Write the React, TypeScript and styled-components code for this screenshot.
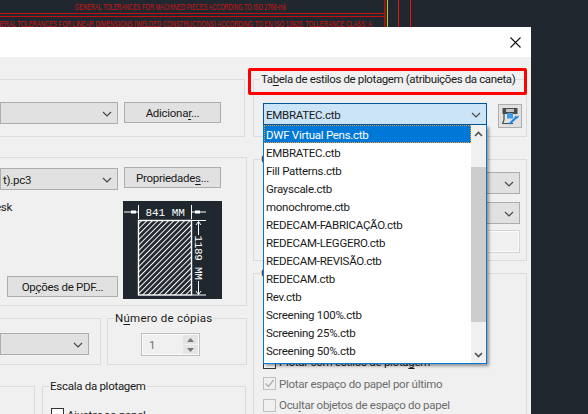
import styled, { createGlobalStyle } from 'styled-components';

const GlobalStyle = createGlobalStyle`
  html, body {
    margin: 0;
    height: 414px;
    overflow: hidden;
    background: #20272f;
    font-family: Roboto, "Liberation Sans", sans-serif;
    font-size: 11.5px;
    letter-spacing: -0.28px;
    color: #1a1a1a;
  }
`;

const Page = styled.div`
  width: 588px;
  height: 414px;
  overflow: hidden;
`;

const CadStrip = styled.svg`
  display: block;
  width: 588px;
  height: 27px;
`;

const Dialog = styled.div`
  width: 531px;
  height: 387px;
  background: #f0f0f0;
  overflow: hidden;
`;

const TitleBar = styled.div`
  height: 30px;
  background: #fff;
  display: flex;
  align-items: center;
  justify-content: flex-end;
  padding-right: 10px;
`;

const Body = styled.div`
  display: grid;
  grid-template-columns: 247px 274px;
  column-gap: 6px;
  padding-top: 22px;
`;

const Column = styled.div`
  display: flex;
  flex-direction: column;
  position: relative;
`;

const Group = styled.div<{ $h?: number; $mt?: number; $w?: number; $open?: boolean }>`
  position: relative;
  box-sizing: border-box;
  flex: none;
  ${p => (p.$h ? `height: ${p.$h}px;` : '')}
  ${p => (p.$w ? `width: ${p.$w}px;` : '')}
  margin-top: ${p => p.$mt ?? 0}px;
  border: 1px solid #dcdcdc;
  ${p => (p.$open ? 'border-left: none;' : '')}
`;

const Legend = styled.span<{ $track?: number }>`
  position: absolute;
  top: -9px;
  left: 6px;
  padding: 0 1px;
  background: #f0f0f0;
  white-space: nowrap;
  line-height: 17px;
  ${p => (p.$track !== undefined ? `letter-spacing: ${p.$track}px;` : '')}
`;

const Key = styled.u`
  text-underline-offset: 2px;
`;

const FirstGroup = styled(Group)`
  display: flex;
  align-items: flex-start;
  padding-top: 22px;
  margin-right: 2px;
`;

const SecondGroup = styled(Group)`
  display: grid;
  grid-template-columns: 118px 99px;
  column-gap: 5px;
  grid-template-rows: 32px 1fr;
  padding-top: 10px;
`;

const Combo = styled.div<{ $w?: number; $h?: number; $active?: boolean; $mt?: number }>`
  box-sizing: border-box;
  width: ${p => (p.$w ? `${p.$w}px` : '100%')};
  height: ${p => p.$h ?? 22}px;
  margin-top: ${p => p.$mt ?? 0}px;
  display: flex;
  align-items: center;
  justify-content: flex-end;
  padding: 1px 5px 0 2px;
  background: ${p => (p.$active ? '#cce4f7' : '#e1e1e1')};
  border: 1px solid ${p => (p.$active ? '#005499' : '#adadad')};
  flex: none;
`;

const ComboText = styled.span<{ $left?: boolean }>`
  white-space: nowrap;
  ${p => (p.$left ? 'margin-right: auto;' : 'position: relative;')}
`;

const ChevronIcon = styled.svg`
  margin-left: auto;
  flex: none;
`;

const Chevron = () => (
  <ChevronIcon width="10" height="6" viewBox="0 0 10 6">
    <path d="M1 1 L5 5 L9 1" fill="none" stroke="#444" strokeWidth="1.1" />
  </ChevronIcon>
);

const Button = styled.div<{ $w: number; $ml?: number; $mt?: number }>`
  box-sizing: border-box;
  width: ${p => p.$w}px;
  height: 21px;
  margin: ${p => p.$mt ?? 0}px 0 0 ${p => p.$ml ?? 0}px;
  display: flex;
  align-items: center;
  justify-content: center;
  background: #e1e1e1;
  border: 1px solid #adadad;
  white-space: nowrap;
  flex: none;
`;

const ClippedText = styled.div`
  width: 12px;
  display: flex;
  justify-content: flex-end;
  white-space: nowrap;
`;

const DeviceInfo = styled.div`
  display: flex;
  flex-direction: column;
  justify-content: space-between;
  height: 99px;
  padding-bottom: 2px;
  box-sizing: border-box;
`;

const PreviewBox = styled.svg`
  display: block;
  width: 99px;
  height: 98px;
  margin-top: 1px;
  background: #21272f;
`;

const SplitRow = styled.div<{ $mt: number; $gap: number }>`
  display: flex;
  column-gap: ${p => p.$gap}px;
  margin-top: ${p => p.$mt}px;
  align-items: flex-start;
`;

const PaperGroup = styled(Group)`
  padding-top: 14px;
  padding-right: 11px;
`;

const CopiesGroup = styled(Group)`
  padding: 14px 0 0 33px;
`;

const Spin = styled.div`
  box-sizing: border-box;
  width: 59px;
  height: 23px;
  display: flex;
  align-items: center;
  justify-content: space-between;
  padding: 0 1px 0 7px;
  border: 1px solid #bfbfbf;
  box-shadow: inset 0 0 0 1px #fafafa;
  color: #6d6d88;
`;

const SpinButtons = styled.div`
  display: flex;
  flex-direction: column;
  row-gap: 1px;
`;

const SpinButton = styled.div`
  width: 15px;
  height: 9px;
  display: flex;
  align-items: center;
  justify-content: center;
  background: #e4e4e4;
`;

const ScaleGroup = styled(Group)`
  padding: 17px 0 0 8px;
`;

const Check = styled.label<{ $disabled?: boolean }>`
  display: flex;
  align-items: center;
  column-gap: 3px;
  height: 21.5px;
  white-space: nowrap;
  color: ${p => (p.$disabled ? '#6d6d6d' : '#1a1a1a')};
`;

const CheckBox = styled.span<{ $disabled?: boolean }>`
  box-sizing: border-box;
  width: 13px;
  height: 13px;
  flex: none;
  display: flex;
  align-items: center;
  justify-content: center;
  background: ${p => (p.$disabled ? '#f0f0f0' : '#fff')};
  border: 1px solid ${p => (p.$disabled ? '#bfbfbf' : '#333')};
`;

const TableGroup = styled(Group)`
  display: flex;
  align-items: flex-start;
  padding: 23px 0 0 9px;
`;

const Highlight = styled.div`
  position: absolute;
  top: -12px;
  left: -6px;
  width: 279px;
  height: 27px;
  box-sizing: border-box;
  border: 3px solid #f00;
  border-radius: 2px;
  pointer-events: none;
`;

const ComboWrap = styled.div`
  position: relative;
  width: 224px;
  flex: none;
`;

const IconButton = styled.div`
  box-sizing: border-box;
  width: 24px;
  height: 24px;
  margin: 1px 0 0 11px;
  background: #e1e1e1;
  border: 1px solid #adadad;
  flex: none;
`;

const Dropdown = styled.div`
  position: absolute;
  z-index: 2;
  top: 100%;
  left: 0;
  width: 224px;
  height: 239px;
  box-sizing: border-box;
  display: flex;
  background: #fff;
  border: 1px solid #0078d7;
  border-top: none;
  box-shadow: 2px 2px 3px rgba(0, 0, 0, 0.4);
`;

const OptionList = styled.div`
  flex: 1;
  min-width: 0;
`;

const Option = styled.div<{ $selected?: boolean }>`
  box-sizing: border-box;
  height: 18px;
  line-height: 20px;
  padding-left: 2px;
  white-space: nowrap;
  ${p =>
    p.$selected
      ? `background: #0078d7;
         color: #fff;
         outline: 1px dotted #f29a2e;
         outline-offset: -1px;`
      : ''}
`;

const ScrollBar = styled.div`
  width: 15px;
  flex: none;
  display: flex;
  flex-direction: column;
  background: #f0f0f0;
`;

const ScrollArrow = styled.div`
  height: 17px;
  flex: none;
  display: flex;
  align-items: center;
  justify-content: center;
`;

const ScrollTrack = styled.div`
  flex: 1;
  padding-top: 25px;
`;

const ScrollThumb = styled.div`
  height: 155px;
  background: #cdcdcd;
`;

const ShadeGroup = styled(Group)`
  display: flex;
  flex-direction: column;
  align-items: flex-end;
  padding: 12px 6px 0 0;
`;

const ShadeField = styled.div<{ $mt?: number }>`
  box-sizing: border-box;
  width: 180px;
  height: 23px;
  margin-top: ${p => p.$mt ?? 0}px;
  background: #f0f0f0;
  border: 2px solid #fbfbfb;
  outline: 1px solid #d4d4d4;
  outline-offset: -1px;
`;

const OptionsGroup = styled(Group)`
  padding: 13px 0 0 9px;
  height: 160px;
`;

const options = [
  'DWF Virtual Pens.ctb',
  'EMBRATEC.ctb',
  'Fill Patterns.ctb',
  'Grayscale.ctb',
  'monochrome.ctb',
  'REDECAM-FABRICAÇÃO.ctb',
  'REDECAM-LEGGERO.ctb',
  'REDECAM-REVISÃO.ctb',
  'REDECAM.ctb',
  'Rev.ctb',
  'Screening 100%.ctb',
  'Screening 25%.ctb',
  'Screening 50%.ctb',
];

const GreyCheck = () => (
  <svg width="11" height="11" viewBox="0 0 11 11">
    <path d="M1.5 5.5 L4.5 8.5 L9.5 2" fill="none" stroke="#b0b0b0" strokeWidth="1.4" />
  </svg>
);

const PrinterIcon = () => (
  <svg width="22" height="22" viewBox="0 0 22 22">
    <rect x="3.5" y="3" width="15" height="6" fill="#4a4a4a" />
    <rect x="7" y="4" width="8" height="3" fill="#c4c4c4" />
    <rect x="8" y="8" width="6" height="5.5" fill="#3f9be8" />
    <path d="M5 9 V15 M3 18.5 H14 M5 15 L3.5 18.5" fill="none" stroke="#4a4a4a" strokeWidth="1.2" />
    <path d="M10.5 19 L17 12.5" stroke="#1c86e0" strokeWidth="2.2" />
    <path d="M15.5 11.5 L18 14 L20 11.5 L19 10.5 L18 12 L17 11 L18.5 9.8 Z" fill="#1c86e0" />
  </svg>
);

export default function App() {
  return (
    <Page>
      <GlobalStyle />
      <CadStrip viewBox="0 0 588 27">
        <g stroke="#c80f0f" strokeWidth="1" fill="none">
          <path d="M0 13.5 H385 M0 16.5 H385" />
          <path d="M385 0 V27 M398.5 0 V27 M410.5 0 V27" stroke="#f01010" />
          <path d="M387.5 0 V27" stroke="#c8c800" />
        </g>
        <g fontFamily="Liberation Sans, sans-serif" fontSize="9" fill="#d41414" letterSpacing="0">
          <text x="75" y="10" textLength="211" lengthAdjust="spacingAndGlyphs">
            GENERAL TOLERANCES FOR MACHINED PIECES ACCORDING TO ISO 2768-mk
          </text>
          <text x="-12" y="26.5" textLength="384" lengthAdjust="spacingAndGlyphs">
            GENERAL TOLERANCES FOR LINEAR DIMENSIONS (WELDED CONSTRUCTIONS) ACCORDING TO EN ISO 13920. TOLLERANCE CLASS: A
          </text>
        </g>
      </CadStrip>
      <Dialog>
        <TitleBar>
          <svg width="11" height="11" viewBox="0 0 11 11">
            <path d="M0.5 0.5 L10.5 10.5 M10.5 0.5 L0.5 10.5" stroke="#111" strokeWidth="1.1" />
          </svg>
        </TitleBar>
        <Body>
          <Column>
            <FirstGroup $h={58} $open>
              <Combo $w={118}>
                <Chevron />
              </Combo>
              <Button $w={97} $ml={6}>
                <span>
                  Adiciona<Key>r</Key>...
                </span>
              </Button>
            </FirstGroup>
            <SecondGroup $h={149} $mt={20} $open>
              <Combo $w={118}>
                <ComboText>t).pc3</ComboText>
                <Chevron />
              </Combo>
              <Button $w={97} $ml={1} $mt={-1}>
                <span>
                  Propriedade<Key>s</Key>...
                </span>
              </Button>
              <DeviceInfo>
                <ClippedText>Autodesk</ClippedText>
                <Button $w={111} $ml={7}>
                  <span>
                    Op<Key>ç</Key>ões de PDF...
                  </span>
                </Button>
              </DeviceInfo>
              <PreviewBox viewBox="0 0 99 98">
                <defs>
                  <pattern id="hatch" width="3.8" height="3.8" patternUnits="userSpaceOnUse" patternTransform="rotate(45)">
                    <line x1="0.5" y1="0" x2="0.5" y2="3.8" stroke="#fff" strokeWidth="1" />
                  </pattern>
                </defs>
                <rect x="15.5" y="19.5" width="53" height="74.5" fill="url(#hatch)" stroke="#fff" strokeWidth="1.4" />
                <g stroke="#fff" strokeWidth="1" fill="none">
                  <path d="M15.5 4 V18 M68.5 4 V18 M1 11 H16 M69 11 H83" />
                  <path d="M69 19.5 H83 M69 94 H83 M75.5 21 V34 M75.5 80 V93" />
                  <path d="M73 24 L75.5 20.5 L78 24 M73 90 L75.5 93.5 L78 90" />
                </g>
                <rect x="8" y="9.5" width="5" height="3" fill="#fff" />
                <rect x="72" y="9.5" width="5" height="3" fill="#fff" />
                <text x="42" y="15" fill="#fff" fontSize="11" fontFamily="Liberation Mono, monospace" textAnchor="middle" textLength="39">
                  841 MM
                </text>
                <text
                  transform="translate(72 56.5) rotate(90)"
                  fill="#fff"
                  fontSize="11"
                  fontFamily="Liberation Mono, monospace"
                  textAnchor="middle"
                  textLength="44"
                >
                  1189 MM
                </text>
              </PreviewBox>
            </SecondGroup>
            <SplitRow $mt={12} $gap={6}>
              <PaperGroup $h={47} $w={101} $open>
                <Combo $h={22}>
                  <Chevron />
                </Combo>
              </PaperGroup>
              <CopiesGroup $h={47} $w={140}>
                <Legend $track={0.25}>
                  N<Key>ú</Key>mero de cópias
                </Legend>
                <Spin>
                  1
                  <SpinButtons>
                    <SpinButton>
                      <svg width="7" height="4" viewBox="0 0 7 4">
                        <path d="M0 4 L3.5 0 L7 4 Z" fill="#777" />
                      </svg>
                    </SpinButton>
                    <SpinButton>
                      <svg width="7" height="4" viewBox="0 0 7 4">
                        <path d="M0 0 L3.5 4 L7 0 Z" fill="#777" />
                      </svg>
                    </SpinButton>
                  </SpinButtons>
                </Spin>
              </CopiesGroup>
            </SplitRow>
            <SplitRow $mt={21} $gap={7}>
              <Group $h={60} $w={35} $open />
              <ScaleGroup $h={60} $w={204}>
                <Legend>Escala da plotagem</Legend>
                <Check>
                  <CheckBox />
                  <span>Ajustar ao papel</span>
                </Check>
              </ScaleGroup>
            </SplitRow>
          </Column>
          <Column>
            <TableGroup $h={58}>
              <Legend $track={-0.37}>
                Ta<Key>b</Key>ela de estilos de plotagem (atribuições da caneta)
              </Legend>
              <ComboWrap>
                <Combo $active>
                  <ComboText $left>EMBRATEC.ctb</ComboText>
                  <Chevron />
                </Combo>
                <Dropdown>
                  <OptionList>
                    {options.map((o, i) => (
                      <Option key={o} $selected={i === 0}>
                        {o}
                      </Option>
                    ))}
                  </OptionList>
                  <ScrollBar>
                    <ScrollArrow>
                      <svg width="9" height="6" viewBox="0 0 9 6">
                        <path d="M1 5 L4.5 1.5 L8 5" fill="none" stroke="#505050" strokeWidth="1.6" />
                      </svg>
                    </ScrollArrow>
                    <ScrollTrack>
                      <ScrollThumb />
                    </ScrollTrack>
                    <ScrollArrow>
                      <svg width="9" height="6" viewBox="0 0 9 6">
                        <path d="M1 1 L4.5 4.5 L8 1" fill="none" stroke="#505050" strokeWidth="1.6" />
                      </svg>
                    </ScrollArrow>
                  </ScrollBar>
                </Dropdown>
              </ComboWrap>
              <IconButton>
                <PrinterIcon />
              </IconButton>
              <Highlight />
            </TableGroup>
            <ShadeGroup $h={102} $mt={22}>
              <Legend>Opções de viewport sombreada</Legend>
              <Combo $w={180}>
                <ComboText $left>Como exibido</ComboText>
                <Chevron />
              </Combo>
              <Combo $w={180} $mt={8}>
                <ComboText $left>Normal</ComboText>
                <Chevron />
              </Combo>
              <ShadeField $mt={6} />
            </ShadeGroup>
            <OptionsGroup $mt={12}>
              <Legend>Opções de plotagem</Legend>
              <Check>
                <CheckBox />
                <span>Plotar em segundo plano</span>
              </Check>
              <Check>
                <CheckBox />
                <span>Plotar espessuras de linha</span>
              </Check>
              <Check>
                <CheckBox />
                <span>Plotar transparência</span>
              </Check>
              <Check>
                <CheckBox />
                <span>
                  Plotar com estilos de plota<Key>g</Key>em
                </span>
              </Check>
              <Check $disabled>
                <CheckBox $disabled>
                  <GreyCheck />
                </CheckBox>
                <span>Plotar espaço do papel por último</span>
              </Check>
              <Check $disabled>
                <CheckBox $disabled />
                <span>
                  Ocu<Key>l</Key>tar objetos de espaço do papel
                </span>
              </Check>
            </OptionsGroup>
          </Column>
        </Body>
      </Dialog>
    </Page>
  );
}
